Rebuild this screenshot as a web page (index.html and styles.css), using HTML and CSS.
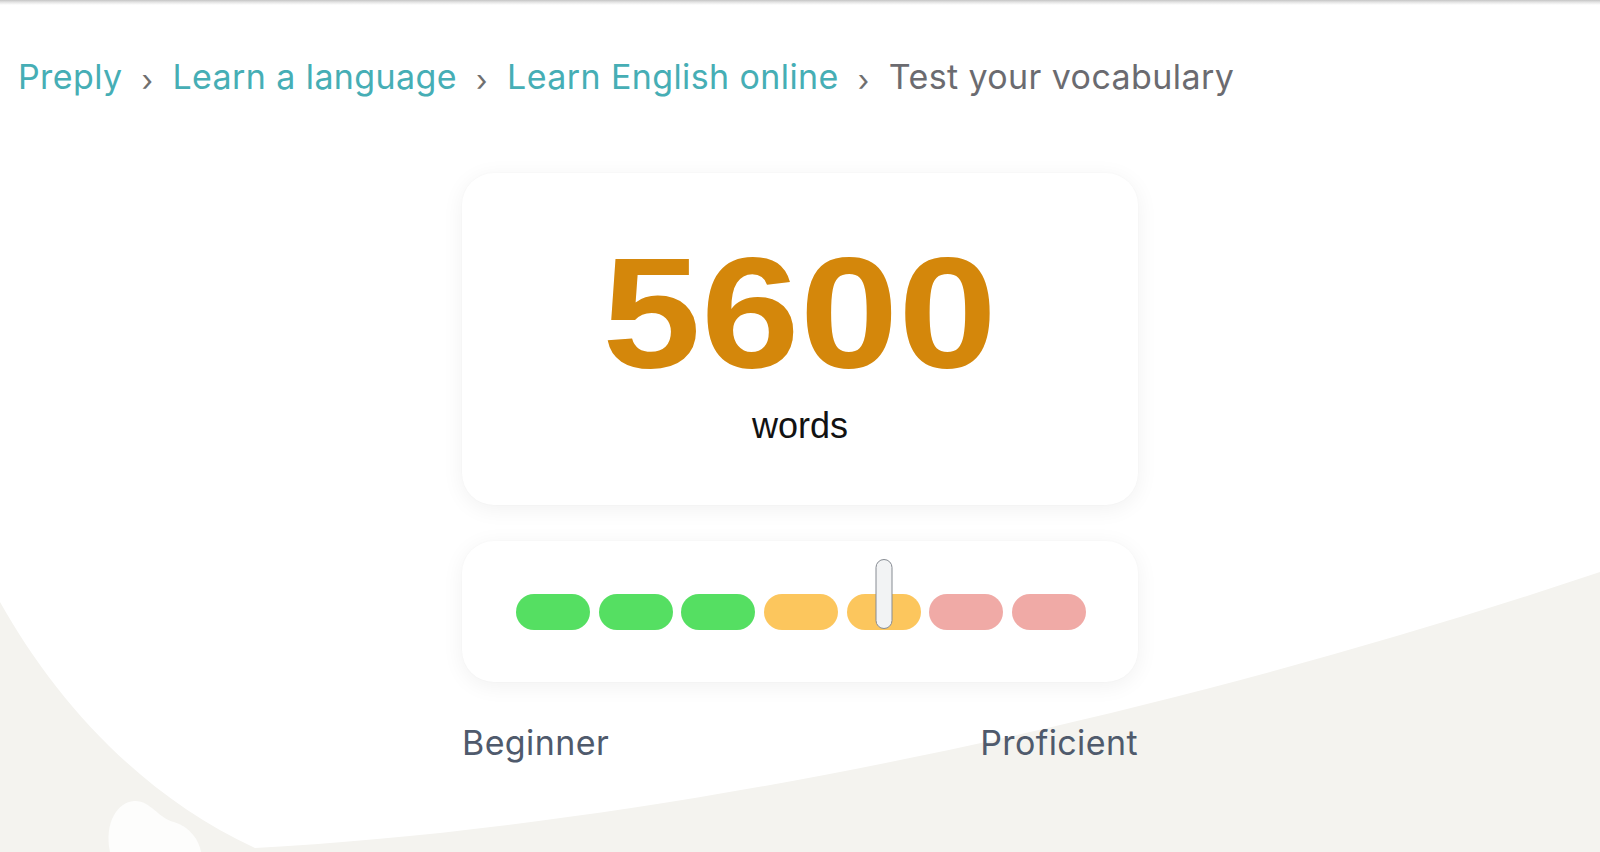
FILE: index.html
```html
<!DOCTYPE html>
<html lang="en">
<head>
<meta charset="utf-8">
<title>Test your vocabulary</title>
<link rel="stylesheet" href="styles.css">
</head>
<body>
<svg class="backdrop" viewBox="0 0 1600 852" preserveAspectRatio="none" aria-hidden="true">
  <path d="M0,602 C55,700 140,795 255,848 C600,830 1100,740 1600,572 L1600,852 L0,852 Z" fill="#f4f3ef"/>
  <path d="M110,852 C104,822 118,802 134,801 C150,800 158,818 174,822 C190,827 199,840 201,852 Z" fill="#fdfdfc"/>
</svg>
<div class="topbar"></div>
<nav class="crumbs">
  <a class="crumb link" href="#">Preply</a>
  <span class="sep">›</span>
  <a class="crumb link" href="#">Learn a language</a>
  <span class="sep">›</span>
  <a class="crumb link" href="#">Learn English online</a>
  <span class="sep">›</span>
  <span class="crumb current">Test your vocabulary</span>
</nav>
<main class="result">
  <section class="card score">
    <div class="number">5600</div>
    <div class="unit">words</div>
  </section>
  <section class="card scale">
    <div class="pills">
      <span class="pill green"></span>
      <span class="pill green"></span>
      <span class="pill green"></span>
      <span class="pill yellow"></span>
      <span class="pill yellow active"><span class="handle"></span></span>
      <span class="pill red"></span>
      <span class="pill red"></span>
    </div>
  </section>
  <div class="labels">
    <span>Beginner</span>
    <span>Proficient</span>
  </div>
</main>
</body>
</html>
```
FILE: styles.css
```css
html, body {
  margin: 0;
  padding: 0;
}
body {
  width: 1600px;
  height: 852px;
  overflow: hidden;
  background: #ffffff;
  position: relative;
  font-family: Inter, "Noto Sans", sans-serif;
}
.backdrop {
  position: absolute;
  left: 0;
  top: 0;
  width: 1600px;
  height: 852px;
  z-index: 0;
}
.topbar {
  position: relative;
  z-index: 2;
  height: 5px;
  background: linear-gradient(to bottom, #c4c4c4 0%, #e2e2e2 40%, rgba(255,255,255,0) 100%);
}
.crumbs {
  position: relative;
  z-index: 1;
  display: flex;
  align-items: center;
  gap: 19px;
  padding: 52px 18px 0;
  height: 40px;
  line-height: 40px;
  font-size: 34px;
  letter-spacing: 0.4px;
}
.crumb {
  text-decoration: none;
}
.link {
  color: #46aeb5;
}
.current {
  color: #6b6b70;
}
.sep {
  color: #6f6f6f;
  font-size: 30px;
  position: relative;
  top: 3px;
}
.result {
  position: relative;
  z-index: 1;
  width: 676px;
  margin: 76px auto 0;
  display: flex;
  flex-direction: column;
}
.card {
  background: #ffffff;
  border-radius: 32px;
  box-shadow: 0 4px 22px rgba(0, 0, 0, 0.06), 0 0 2px rgba(0, 0, 0, 0.03);
}
.score {
  height: 332px;
  box-sizing: border-box;
  padding-top: 62px;
  display: flex;
  flex-direction: column;
  align-items: center;
}
.number {
  font-family: "Liberation Sans", Arial, sans-serif;
  font-weight: 700;
  font-size: 157px;
  line-height: 156px;
  color: #d4870b;
  letter-spacing: 0;
  transform: scaleX(1.13);
}
.unit {
  margin-top: 15px;
  font-family: "Liberation Sans", Arial, sans-serif;
  font-size: 36px;
  line-height: 40px;
  color: #121212;
}
.scale {
  margin-top: 36px;
  height: 141px;
  display: flex;
  align-items: center;
  justify-content: center;
}
.pills {
  display: flex;
  gap: 8.7px;
  padding-left: 2px;
}
.pill {
  position: relative;
  width: 74px;
  height: 36px;
  border-radius: 18px;
}
.green { background: #55df62; }
.yellow { background: #fcc65d; }
.red { background: #f0aaa6; }
.handle {
  position: absolute;
  left: 50%;
  bottom: 1px;
  width: 15px;
  height: 68px;
  transform: translateX(-50%);
  background: #f2f3f4;
  border: 1.5px solid #868b92;
  border-radius: 9px;
}
.labels {
  margin-top: 41px;
  display: flex;
  justify-content: space-between;
  font-size: 34px;
  line-height: 40px;
  letter-spacing: 0.4px;
  color: #4f5a6c;
}
```
